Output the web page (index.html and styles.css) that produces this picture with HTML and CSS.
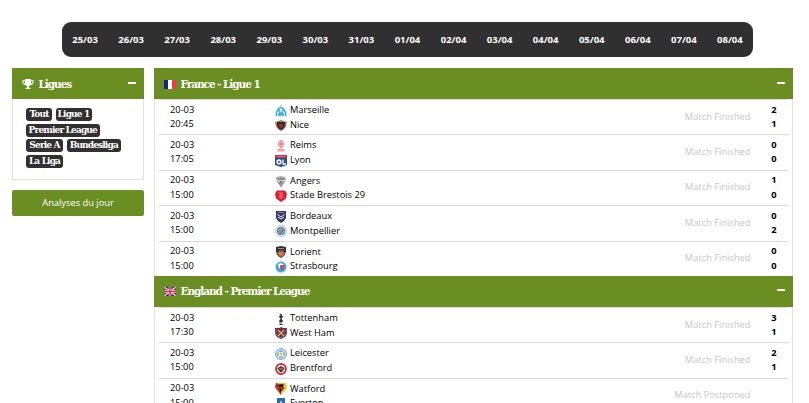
FILE: index.html
```
<!DOCTYPE html>
<html lang="fr">
<head>
<meta charset="utf-8">
<title>Ligues</title>
<link rel="stylesheet" href="styles.css">
</head>
<body>
<nav class="dates"><span>25/03</span><span>26/03</span><span>27/03</span><span>28/03</span><span>29/03</span><span>30/03</span><span>31/03</span><span>01/04</span><span>02/04</span><span>03/04</span><span>04/04</span><span>05/04</span><span>06/04</span><span>07/04</span><span>08/04</span></nav>
<div class="page">
<aside>
  <section class="panel leagues">
    <h2 class="head side-head"><svg class="trophy" viewBox="0 0 12 11"><path fill="#fff" d="M3 0h6v1.2h2.7v1.2c0 2-1.4 3.3-3.2 3.6-.4.6-1 1-1.7 1.3V8.5c1 .1 1.8.6 1.8 1.5H3.4c0-.9.8-1.4 1.8-1.5V7.300C4.500 7 3.900 6.600 3.500 6 1.700 5.700.3 4.400.3 2.400V1.200H3zM1.200 2.200c.1 1.300.7 2.100 1.900 2.500A9 9 0 0 1 2.900 2.200zM9.100 2.200c0 1-.1 1.800-.3 2.500 1.300-.4 1.900-1.200 2-2.500z"/></svg><span class="title">Ligues</span><i class="minus"></i></h2>
    <div class="tags"><span class="tag w26">Tout</span><span class="tag w36">Ligue 1</span><span class="tag w73">Premier League</span><span class="tag w37">Serie A</span><span class="tag w54">Bundesliga</span><span class="tag w37">La Liga</span></div>
  </section>
  <a class="button">Analyses du jour</a>
</aside>
<main class="panel">
  <h2 class="head"><svg class="flag" viewBox="0 0 12 9"><path fill="#fff" d="M0 0h12v9H0z"/><path fill="#15258c" d="M0 0h4v9H0z"/><path fill="#f03a48" d="M8 0h4v9H8z"/></svg><span class="title">France - Ligue 1</span><i class="minus"></i></h2>
  <div class="match"><div class="time">20-03<br>20:45</div><div class="teams">
    <div><svg viewBox="0 0 12 12"><path fill="none" stroke="#42afe0" stroke-width="1.700" d="M1.500 11V7L3.500 4 6 10l2.500-6 2 3v4M4 11V8M8 11V8M2.500 5.500Q6 0 9.500 5.500"/><path fill="#b9c9a0" d="M5 0h2v1.500H5z"/></svg>Marseille</div>
    <div><svg viewBox="0 0 12 12"><path fill="#9b8a62" d="M0 3l3-1 3-1 3 1 3 1-1 5-3 3-2 1-2-1-3-3z"/><path fill="#3a2a26" d="M2 3h8v4L8 10l-2 1-2-1-2-3z"/><path fill="#a52535" d="M4 5h4v2L6 9.500 4 7z"/></svg>Nice</div></div><div class="status">Match Finished</div><div class="score">2<br>1</div></div>
  <div class="match"><div class="time">20-03<br>17:05</div><div class="teams">
    <div><svg viewBox="0 0 12 12"><ellipse cx="6" cy="4" rx="2.400" ry="3.600" fill="#fbd9da" stroke="#f28b8d"/><path stroke="#ee6d70" d="M6 1v7M4 4h4" fill="none"/><path fill="#ef898c" d="M2.500 9h7v2.500h-7z"/><path stroke="#fff" stroke-width=".4" d="M2.500 10.300h7"/></svg>Reims</div>
    <div><svg viewBox="0 0 12 12"><path fill="#bd3441" d="M0 0h12v4H0z"/><path fill="#24508a" d="M0 3h12v7l-6 2-6-2z"/><path stroke="#dc9296" stroke-width=".7" d="M2 1.500h8"/><circle cx="4" cy="7" r="2" fill="none" stroke="#fff" stroke-width="1.300"/><path fill="none" stroke="#fff" stroke-width="1.300" d="M8 4.500V9h3"/><circle cx="4" cy="7" r=".8" fill="#d6b267"/></svg>Lyon</div></div><div class="status">Match Finished</div><div class="score">0<br>0</div></div>
  <div class="match"><div class="time">20-03<br>15:00</div><div class="teams">
    <div><svg viewBox="0 0 12 12"><path fill="#b8b8b8" d="M1 1l5-1 5 1-.8 5L6 12 1.800 6z"/><path fill="none" stroke="#666" stroke-width=".7" d="M2 3h8M3 2l5 6M9 2L4 8M6 1v9"/><path stroke="#fff" stroke-width=".6" d="M3 4.500h6"/></svg>Angers</div>
    <div><svg viewBox="0 0 12 12"><path fill="#d51f35" d="M2 .5h8l2 3-1 5L6 12 1 8.500l-1-5z"/><path fill="none" stroke="#f0808c" stroke-width=".8" d="M3 3h5M4 5h4M3 7h6M6 3v6"/></svg>Stade Brestois 29</div></div><div class="status">Match Finished</div><div class="score">1<br>0</div></div>
  <div class="match"><div class="time">20-03<br>15:00</div><div class="teams">
    <div><svg viewBox="0 0 12 12"><path fill="#343a68" d="M1 0h10v7l-2 3-3 2-3-2-2-3z"/><path fill="none" stroke="#fff" stroke-width=".9" d="M2.500 3.500L6 6l3.500-2.500M3 6l3 2 3-2"/><path stroke="#9299b8" stroke-width=".8" d="M3 1.500h6"/></svg>Bordeaux</div>
    <div><svg viewBox="0 0 12 12"><circle cx="6" cy="6" r="5.500" fill="#e1e7ee" stroke="#b8cddd"/><circle cx="6" cy="6" r="4" fill="#3b83b8"/><path stroke="#e88545" stroke-width="1.600" d="M3 8.500L8.500 3"/><path stroke="#fff" stroke-width=".6" d="M3 6l3-3M6 9.300L9.300 6"/></svg>Montpellier</div></div><div class="status">Match Finished</div><div class="score">0<br>2</div></div>
  <div class="match"><div class="time">20-03<br>15:00</div><div class="teams">
    <div><svg viewBox="0 0 12 12"><path fill="#342f30" d="M1 1l5-1 5 1v5l-2 4-3 2-3-2-2-4z"/><path fill="#ce6d38" d="M2 6h8L8 10l-2 1-2-1z"/><path fill="none" stroke="#b7a793" stroke-width=".8" d="M3 2.500h6M3.500 5h5M4 7l4 2"/></svg>Lorient</div>
    <div><svg viewBox="0 0 12 12"><circle cx="6" cy="6" r="5.500" fill="#37a6d8" stroke="#b8dcea" stroke-width=".7"/><path fill="#fff" d="M3 3q4-2 6 1L6 5 4 8z"/><path fill="none" stroke="#df3544" stroke-width="1.300" d="M5 5h3.500L6 6.500 9 8H6"/></svg>Strasbourg</div></div><div class="status">Match Finished</div><div class="score">0<br>0</div></div>
  <h2 class="head"><svg class="flag" viewBox="0 0 12 9"><path fill="#1c286b" d="M0 0h12v9H0z"/><path stroke="#fff" stroke-width="1.500" d="M0 0l12 9M12 0L0 9"/><path stroke="#e33b4b" stroke-width=".6" d="M0 0l12 9M12 0L0 9"/><path stroke="#fff" stroke-width="2.600" d="M6 0v9M0 4.500h12"/><path stroke="#e32640" stroke-width="1.500" d="M6 0v9M0 4.500h12"/></svg><span class="title">England - Premier League</span><i class="minus"></i></h2>
  <div class="match"><div class="time">20-03<br>17:30</div><div class="teams">
    <div><svg viewBox="0 0 12 12"><path fill="none" stroke="#252850" stroke-width="1.300" d="M5 1l1 1h1M6 2v3M4 3.500l2 1 2-1M6 5v2M4.500 11.500h3"/><circle cx="6" cy="8" r="1.800" fill="#252850"/><path stroke="#a3a5bb" stroke-width=".6" d="M4 9.500l4 2M4 11l3-2"/></svg>Tottenham</div>
    <div><svg viewBox="0 0 12 12"><path fill="#7b2c43" d="M0 1h4l2-1 2 1h4v6l-2 3-4 2-4-2-2-3z"/><path fill="none" stroke="#d8b568" stroke-width="1.200" d="M3 3l6 6M9 3L3 9"/><path fill="none" stroke="#699cbb" stroke-width=".6" d="M1 2v5l2 2 3 2 3-2 2-2V2"/></svg>West Ham</div></div><div class="status">Match Finished</div><div class="score">3<br>1</div></div>
  <div class="match"><div class="time">20-03<br>15:00</div><div class="teams">
    <div><svg viewBox="0 0 12 12"><circle cx="6" cy="6" r="5.400" fill="#d8e8f4" stroke="#4c86b9" stroke-width=".8"/><circle cx="6" cy="6" r="3.800" fill="#76a9d3"/><path fill="#f2f1d5" d="M3 3l3 1.500L9 3 8 6l1 3-3-1-3 1 1-3z"/><circle cx="6" cy="6" r="1.200" fill="#e2bd4a"/></svg>Leicester</div>
    <div><svg viewBox="0 0 12 12"><circle cx="6" cy="6" r="4.900" fill="#fff" stroke="#d92c36" stroke-width="2"/><path fill="#423431" d="M2.500 5l2-1L6 3l1.500 1 2 1L8 8l-2 1.500L4 8z"/><path stroke="#cca45c" d="M4 6h4"/></svg>Brentford</div></div><div class="status">Match Finished</div><div class="score">2<br>1</div></div>
  <div class="match"><div class="time">20-03<br>15:00</div><div class="teams">
    <div><svg viewBox="0 0 12 12"><path fill="#f1bd2a" d="M1 0h10l1 5-6 7-6-7z"/><path fill="#ce2636" d="M0 4L1 0l5 2-3 3 3 2v5z"/><path fill="#211c1d" d="M6 1l3 .5-1 2 1 1.500-4 5V7L3.500 5 5 4 2 3z"/><path fill="#df4938" d="M5 4l3 .5L6.500 7z"/></svg>Watford</div>
    <div><svg viewBox="0 0 12 12"><path fill="#276bb0" d="M2 0h8v8l-4 4-4-4z"/><path fill="#a8c6e4" d="M5 3h2v5H5z"/></svg>Everton</div></div><div class="status">Match Postponed</div><div class="score"></div></div>
</main>
</div>
</body>
</html>
```
FILE: styles.css
```
* { box-sizing: border-box; }
html, body { height: 403px; overflow: hidden; }
body { margin: 0; padding-top: 22px; background: #fff; color: #000; font: 9.300px/14.300px "Open Sans", "Noto Sans", sans-serif; }
.dates { display: flex; width: 691px; height: 35px; margin: 0 0 11px 62px; border-radius: 9px; background: #303030; color: #fff; font-size: 9.500px; font-weight: 700; line-height: 35px; }
.dates span { flex: 1; text-align: center; }
.page { display: flex; align-items: flex-start; gap: 10px; padding-left: 12px; }
aside { width: 132px; }
main { width: 639px; }
.panel { border: 1px solid #e1e1e1; border-top: 0; }
.head { display: flex; align-items: center; height: 31px; margin: 0 -1px; padding: 0 8px 0 10px; background: #6b8e23; color: #fff; font: 700 10.500px/31px "Roboto Slab", "DejaVu Serif", serif; }
.title { padding-top: 1px; white-space: nowrap; letter-spacing: -1.050px; }
.minus { width: 8px; height: 2px; margin: 0 0 2px auto; background: #fff; border-radius: .5px; }
.flag { width: 12px; height: 9px; margin: 1px 4.500px 0 0; }
.trophy { width: 12px; height: 11px; margin: 1px 4.500px 0 0; }
.leagues { height: 111.500px; }
.tags { display: flex; flex-wrap: wrap; gap: 2.700px 3.500px; padding: 9px 10px 0 13px; }
.tag { height: 13px; border-radius: 3px; background: #303030; color: #fff; font: 700 9px/12.500px "Roboto Slab", "DejaVu Serif", serif; letter-spacing: -.850px; text-align: center; white-space: nowrap; }
.w26 { width: 26px; }
.w36 { width: 36px; }
.w37 { width: 37px; }
.w54 { width: 54.500px; }
.w73 { width: 73.500px; }
.button { display: block; height: 26px; margin-top: 10.500px; border-radius: 2px; background: #6b8e23; color: #fff; line-height: 26px; text-align: center; }
.match { display: flex; height: 35.400px; margin: 0 3px; padding-top: 2.700px; border-top: 1px solid #d9d9d9; border-radius: 3px; }
.time { width: 105px; padding-left: 12px; }
.teams { width: 300px; padding-top: .3px; }
.teams div { display: flex; align-items: center; height: 14.500px; padding-left: 12px; white-space: nowrap; }
.teams svg { width: 12px; height: 12px; margin: 1px 3px 0 0; }
.status { width: 187.500px; color: #c8c8c8; line-height: 28px; text-align: right; }
.score { width: 26px; color: #000; font-weight: 700; text-align: right; }
```
